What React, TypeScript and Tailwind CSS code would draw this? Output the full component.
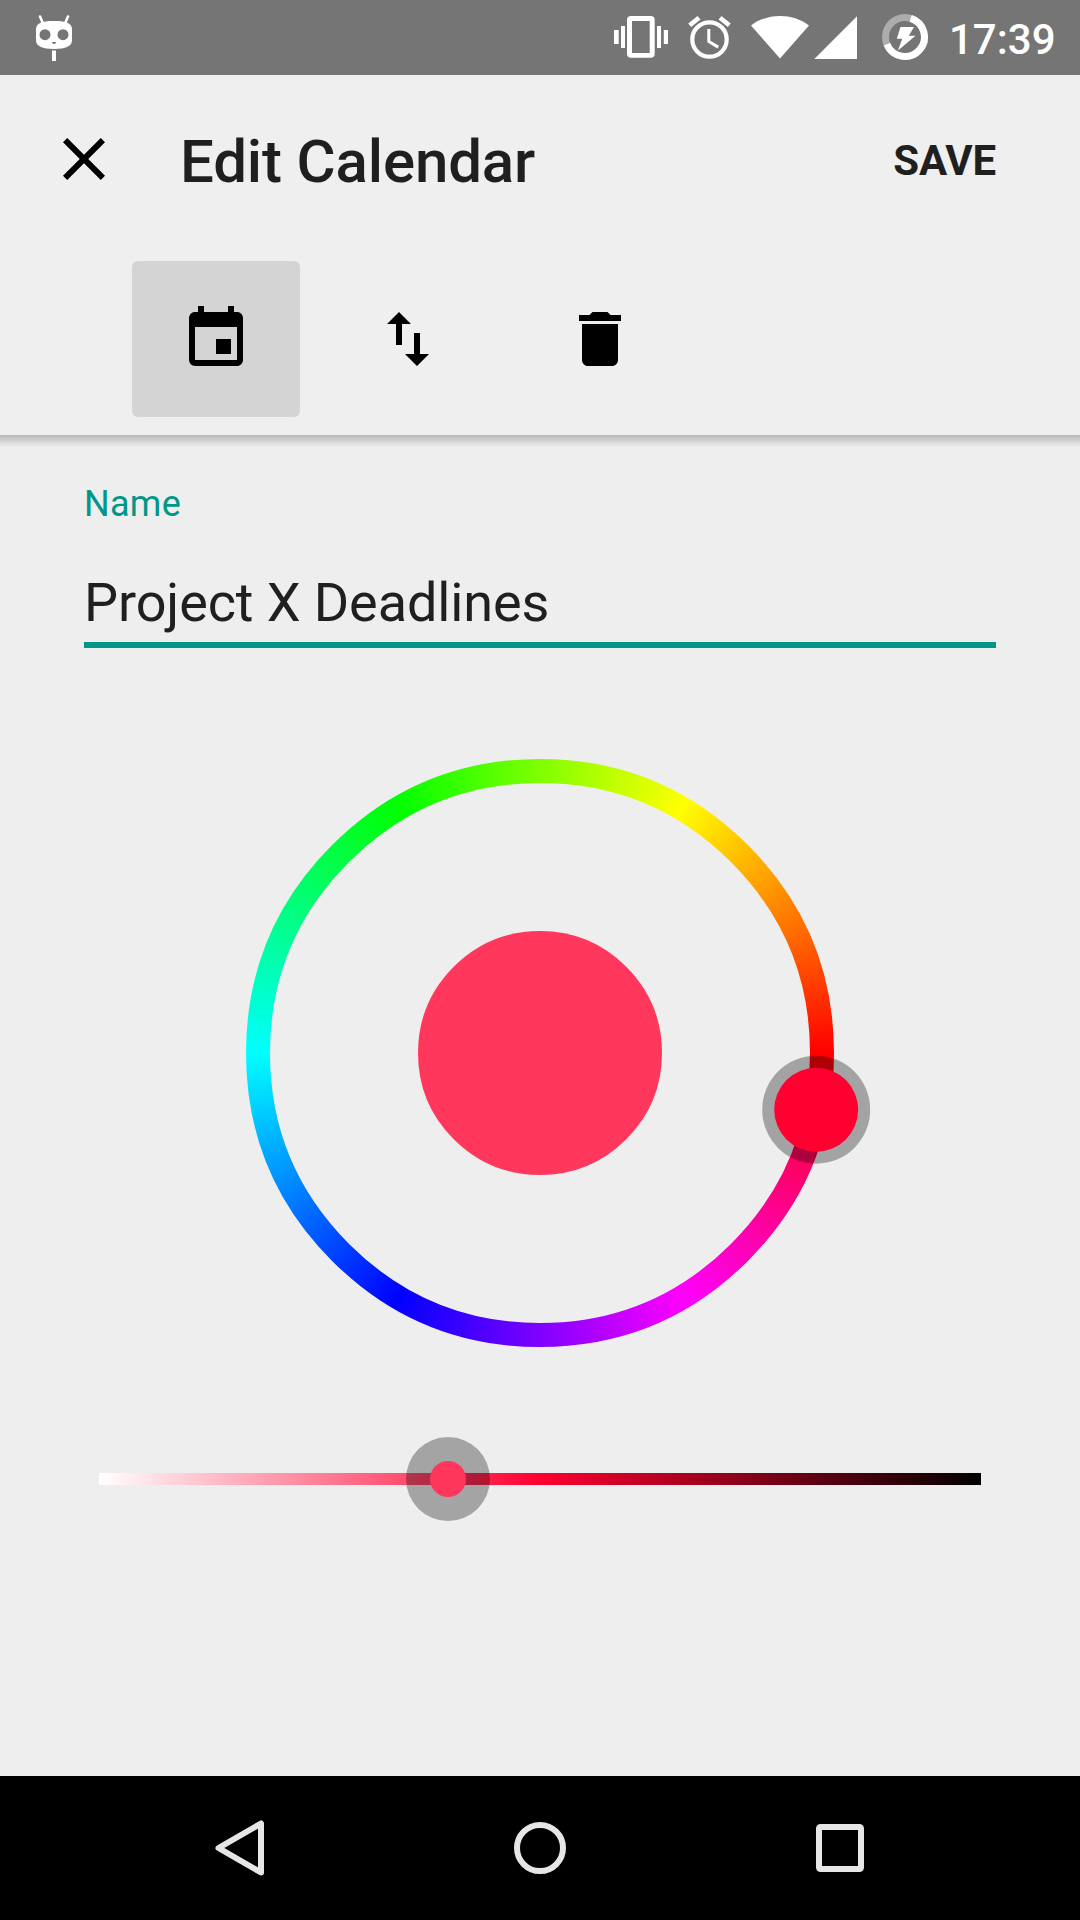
import React from "react";
import { MdClose, MdDelete, MdEvent, MdSwapVert } from "react-icons/md";

// Closed circle built from eight quadratic segments.
function ring(cx: number, cy: number, r: number) {
  const point = (deg: number, radius: number) => {
    const a = (deg * Math.PI) / 180;
    return `${(cx + radius * Math.cos(a)).toFixed(2)} ${(cy + radius * Math.sin(a)).toFixed(2)}`;
  };
  const control = r / Math.cos(Math.PI / 8);
  let d = `M${point(0, r)}`;
  for (let i = 0; i < 8; i++) {
    d += `Q${point(i * 45 + 22.5, control)} ${point((i + 1) * 45, r)}`;
  }
  return d + "Z";
}

function StatusBar() {
  return (
    <div className="flex h-[75px] items-center justify-between bg-[#757575] text-white">
      <svg className="ml-[30px] h-[75px] w-[48px]" viewBox="30 0 48 75" fill="none">
        <path d="M40 16.5l2.6 6M68 16.5l-2.6 6" stroke="white" strokeWidth="2.6" strokeLinecap="round" />
        <path
          fillRule="evenodd"
          fill="white"
          d="M54 21c7 0 11 .5 13.500 1.800C70.500 24.300 72 26 72 29.500V40c0 3.500-1.500 5.300-4.500 6.800C64.500 48.300 60 49 54 49s-10.500-.7-13.500-2.200C37.500 45.300 36 43.500 36 40V29.500c0-3.500 1.500-5.200 4.500-6.700C43 21.500 47 21 54 21zM45 29.200a5.500 5.500 0 1 0 0 11a5.500 5.500 0 1 0 0-11zM63 29.200a5.500 5.500 0 1 0 0 11a5.500 5.500 0 1 0 0-11zM52 42c0 1.300.9 2 2 2s2-.7 2-2z"
        />
        <path d="M52 50.500h4V61h-4z" fill="white" />
      </svg>
      <div className="flex w-[470px] items-center">
        <svg className="h-[75px] w-[66px] shrink-0" viewBox="610 0 66 75" fill="white">
          <path d="M614 30h4.700v14H614zM621 26h4v22h-4zM657 26h4v22h-4zM663.800 30h4.200v14h-4.200z" />
          <path
            fillRule="evenodd"
            d="M631 16h19.700a4 4 0 0 1 4 4v33.700a4 4 0 0 1-4 4H631a4 4 0 0 1-4-4V20a4 4 0 0 1 4-4zm1 5v32h17.700V21z"
          />
        </svg>
        <svg className="h-[75px] w-[66px] shrink-0" viewBox="676 0 66 75" fill="none" stroke="white">
          <circle cx="709.500" cy="39.500" r="17.200" strokeWidth="4.200" />
          <path d="M708.800 29v12.500l9.400 5.600" strokeWidth="3" />
          <path d="M689.700 25.300l9.300-7.600M729.300 25.300l-9.300-7.600" strokeWidth="4.600" />
        </svg>
        <svg className="h-[75px] w-[70px] shrink-0" viewBox="742 0 70 75" fill="white">
          <path d="M780 58.500L751 25.400C759.500 19.200 769.500 16 780 16s20.500 3.200 29 9.400z" />
        </svg>
        <svg className="h-[75px] w-[60px] shrink-0" viewBox="812 0 60 75" fill="white">
          <path d="M857 16.300V59h-42.700z" />
        </svg>
        <svg className="h-[75px] w-[77px] shrink-0" viewBox="872 0 77 75" fill="none">
          <circle cx="905" cy="37" r="19.500" stroke="#ffffff" strokeOpacity="0.4" strokeWidth="7" />
          <path d="M910.700 18.350A19.500 19.500 0 1 1 886.900 44.300" stroke="white" strokeWidth="7" />
          <path d="M900.500 27h13.500l-5.200 8.700h6.700L898 50.500l4.200-11.700h-5.400z" fill="white" />
        </svg>
        <span className="pt-[5px] text-[42px] leading-[50px] font-medium">17:39</span>
      </div>
    </div>
  );
}

function Header() {
  return (
    <header className="h-[360px] bg-[#efefef]">
      <div className="flex h-[168px] items-center pr-[84px] pl-[48px]">
        <MdClose className="size-[72px] text-black" />
        <h1 className="ml-[60px] pt-[6px] text-[60px] leading-[70px] font-medium tracking-[-0.15px]">Edit Calendar</h1>
        <button className="ml-auto pt-[3px] text-[42px] leading-[50px] font-bold tracking-[-0.2px]">SAVE</button>
      </div>
      <div className="flex pt-[18px] pl-[132px] text-black">
        <button className="flex h-[156px] w-[168px] items-center justify-center rounded-[6px] bg-[#d4d4d4]">
          <MdEvent className="size-[72px]" />
        </button>
        <button className="ml-[24px] flex h-[156px] w-[168px] items-center justify-center">
          <MdSwapVert className="size-[72px]" />
        </button>
        <button className="ml-[24px] flex h-[156px] w-[168px] items-center justify-center">
          <MdDelete className="size-[72px]" />
        </button>
      </div>
    </header>
  );
}

function ColorWheel() {
  const clip = `path(evenodd, "${ring(294, 294, 294)}${ring(294, 294, 270)}")`;
  return (
    <div className="relative mx-auto mt-[111px] size-[588px]">
      <div
        className="size-full bg-[conic-gradient(from_90deg,#f00,#f0f,#00f,#0ff,#0f0,#ff0,#f00)]"
        style={{ clipPath: clip }}
      />
      <svg className="absolute inset-0 size-full overflow-visible" viewBox="0 0 588 588">
        <path d={ring(294, 294, 122)} fill="#ff375c" />
        <circle cx="570.200" cy="350.700" r="54" fill="black" fillOpacity="0.314" />
        <circle cx="570.200" cy="350.700" r="42" fill="#ff0030" />
      </svg>
    </div>
  );
}

function ShadeSlider() {
  return (
    <div className="relative mt-[126px] ml-[99px] h-[12px] w-[882px] bg-linear-[to_right,#fff,#ff0030_50%,#000]">
      <div className="absolute top-[-36px] left-[307px] flex size-[84px] items-center justify-center rounded-full bg-black/31">
        <div className="size-[36px] rounded-full bg-[#ff375c]" />
      </div>
    </div>
  );
}

function NavBar() {
  return (
    <nav className="flex h-[144px] items-center justify-center gap-[228px] bg-black">
      <svg className="size-[72px]" viewBox="0 0 72 72" fill="none" stroke="#e6e6e6" strokeWidth="6" strokeLinejoin="round">
        <path d="M57 11.500v49L14.500 36z" />
      </svg>
      <svg className="size-[72px]" viewBox="0 0 72 72" fill="none" stroke="#e6e6e6" strokeWidth="6">
        <circle cx="36" cy="36" r="23" />
      </svg>
      <svg className="size-[72px]" viewBox="0 0 72 72" fill="none" stroke="#e6e6e6" strokeWidth="6">
        <rect x="15" y="15" width="42" height="42" rx="1.500" />
      </svg>
    </nav>
  );
}

export default function App() {
  return (
    <div className="flex h-[1920px] w-[1080px] flex-col overflow-hidden bg-[#eeeeee] font-[Roboto,sans-serif] text-[#1f1f1f]">
      <StatusBar />
      <Header />
      <main className="flex-1">
        <div className="h-[13px] bg-linear-[to_bottom,#b9b9b9,#cecece_38%,#e6e6e6_78%,#eeeeee]" />
        <div className="mx-[84px] flex flex-col">
          <label className="mt-[35px] text-[36px] leading-[42px] tracking-[0.3px] text-[#009688]">Name</label>
          <div className="mt-[45px] border-b-[6px] border-[#009688] pb-[7px] text-[54px] leading-[65px] tracking-[-0.1px]">
            Project X Deadlines
          </div>
        </div>
        <ColorWheel />
        <ShadeSlider />
      </main>
      <NavBar />
    </div>
  );
}
